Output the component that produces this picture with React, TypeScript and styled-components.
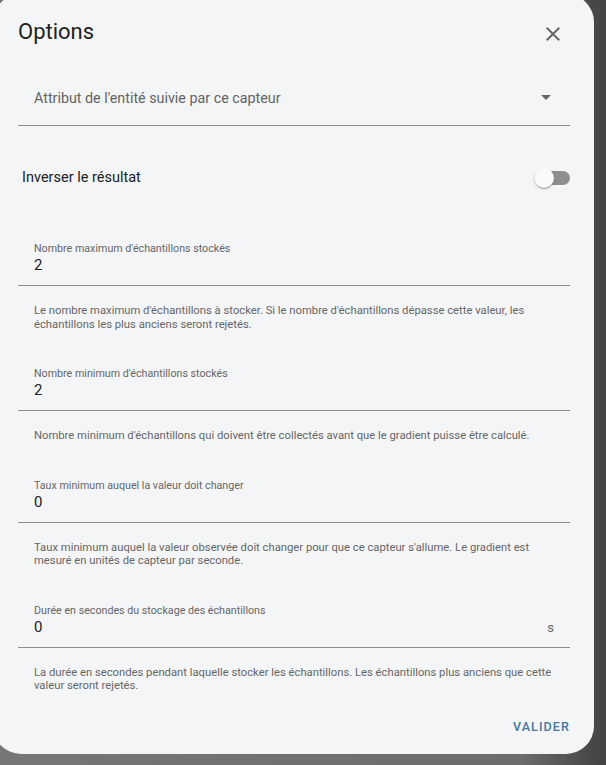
import React from "react";
import styled, { createGlobalStyle } from "styled-components";

const Global = createGlobalStyle`
  html, body { margin: 0; padding: 0; }
  body {
    width: 606px;
    height: 765px;
    overflow: hidden;
    font-family: Roboto, "Noto Sans", sans-serif;
    background: linear-gradient(90deg, #777777 0%, #6c6c6c 86%, #4a4a4a 97%, #444444 100%);
  }
`;

const Page = styled.div`
  width: 606px;
  height: 765px;
  overflow: hidden;
`;

const Dialog = styled.div`
  margin: -6px 0 0 -7px;
  width: 601px;
  box-sizing: border-box;
  padding: 0 24px 9px 25px;
  background: #f4f5f7;
  border-radius: 28px;
  display: flex;
  flex-direction: column;
`;

const Header = styled.div`
  display: flex;
  justify-content: space-between;
  align-items: flex-start;
  padding-top: 24px;
`;

const Title = styled.h2`
  margin: 0;
  font-size: 22px;
  line-height: 28px;
  font-weight: 400;
  color: #212121;
`;

const CloseButton = styled.button`
  all: unset;
  width: 24px;
  height: 24px;
  margin: 4px 5px 0 0;
  color: #676767;
  display: flex;
  align-items: center;
  justify-content: center;
`;

const SelectField = styled.div`
  margin-top: 24px;
  height: 56px;
  box-sizing: border-box;
  border-bottom: 1px solid #8c8c8c;
  display: flex;
  align-items: center;
  justify-content: space-between;
  padding-left: 16px;
`;

const SelectLabel = styled.span`
  font-size: 14.3px;
  color: #636363;
`;

const DropIcon = styled.span`
  width: 24px;
  height: 24px;
  margin-right: 12px;
  display: flex;
  align-items: center;
  justify-content: center;
`;

const ToggleRow = styled.div`
  margin-top: 23px;
  height: 56px;
  display: flex;
  align-items: center;
  justify-content: space-between;
  padding-left: 4px;
`;

const ToggleLabel = styled.span`
  font-size: 14.5px;
  color: #212121;
`;

const Switch = styled.span`
  position: relative;
  width: 36px;
  height: 14px;
  border-radius: 7px;
  background: #8f8f8f;
  margin-top: 2px;
`;

const Thumb = styled.span`
  position: absolute;
  left: 0;
  top: -3px;
  width: 20px;
  height: 20px;
  border-radius: 50%;
  background: #fafafa;
  box-shadow: 0 2px 1px -1px rgba(0,0,0,0.2), 0 1px 1px 0 rgba(0,0,0,0.14), 0 1px 3px 0 rgba(0,0,0,0.12);
`;

const FieldGroup = styled.div<{ $first?: boolean }>`
  margin-top: ${(p) => (p.$first ? "25px" : "24px")};
`;

const Field = styled.div`
  height: 56px;
  box-sizing: border-box;
  border-bottom: 1px solid #8c8c8c;
  padding: 12px 16px 0;
`;

const FloatLabel = styled.div`
  font-size: 10.7px;
  line-height: 14px;
  color: #666666;
`;

const ValueRow = styled.div`
  display: flex;
  justify-content: space-between;
  align-items: center;
  height: 18px;
`;

const Value = styled.span`
  font-size: 15px;
  line-height: 18px;
  color: #212121;
`;

const Suffix = styled.span`
  font-size: 13px;
  color: #666666;
  margin-top: 2px;
`;

const Helper = styled.div`
  padding: 18px 16px 0;
  font-size: 11.25px;
  line-height: 13.5px;
  color: #666666;
  max-width: 520px;
`;

const Actions = styled.div`
  display: flex;
  justify-content: flex-end;
  margin-top: 16px;
`;

const TextButton = styled.button`
  all: unset;
  height: 36px;
  display: flex;
  align-items: center;
  font-size: 12.5px;
  font-weight: 500;
  letter-spacing: 1.1px;
  color: #4577a0;
  text-transform: uppercase;
`;

type FieldDef = { label: string; value: string; helper: string; suffix?: string };

const fields: FieldDef[] = [
  {
    label: "Nombre maximum d'échantillons stockés",
    value: "2",
    helper:
      "Le nombre maximum d'échantillons à stocker. Si le nombre d'échantillons dépasse cette valeur, les échantillons les plus anciens seront rejetés.",
  },
  {
    label: "Nombre minimum d'échantillons stockés",
    value: "2",
    helper:
      "Nombre minimum d'échantillons qui doivent être collectés avant que le gradient puisse être calculé.",
  },
  {
    label: "Taux minimum auquel la valeur doit changer",
    value: "0",
    helper:
      "Taux minimum auquel la valeur observée doit changer pour que ce capteur s'allume. Le gradient est mesuré en unités de capteur par seconde.",
  },
  {
    label: "Durée en secondes du stockage des échantillons",
    value: "0",
    suffix: "s",
    helper:
      "La durée en secondes pendant laquelle stocker les échantillons. Les échantillons plus anciens que cette valeur seront rejetés.",
  },
];

export default function App() {
  return (
    <Page>
      <Global />
      <Dialog>
        <Header>
          <Title>Options</Title>
          <CloseButton aria-label="Fermer">
            <svg width="24" height="24" viewBox="0 0 24 24">
              <path
                fill="currentColor"
                d="M19,6.41L17.59,5L12,10.59L6.41,5L5,6.41L10.59,12L5,17.59L6.41,19L12,13.41L17.59,19L19,17.59L13.41,12L19,6.41Z"
              />
            </svg>
          </CloseButton>
        </Header>
        <SelectField>
          <SelectLabel>Attribut de l'entité suivie par ce capteur</SelectLabel>
          <DropIcon>
            <svg width="10" height="5" viewBox="7 10 10 5">
              <polygon fill="#666" points="7 10 12 15 17 10" />
            </svg>
          </DropIcon>
        </SelectField>
        <ToggleRow>
          <ToggleLabel>Inverser le résultat</ToggleLabel>
          <Switch>
            <Thumb />
          </Switch>
        </ToggleRow>
        {fields.map((f, i) => (
          <FieldGroup key={f.label} $first={i === 0}>
            <Field>
              <FloatLabel>{f.label}</FloatLabel>
              <ValueRow>
                <Value>{f.value}</Value>
                {f.suffix && <Suffix>{f.suffix}</Suffix>}
              </ValueRow>
            </Field>
            <Helper>{f.helper}</Helper>
          </FieldGroup>
        ))}
        <Actions>
          <TextButton>Valider</TextButton>
        </Actions>
      </Dialog>
    </Page>
  );
}
